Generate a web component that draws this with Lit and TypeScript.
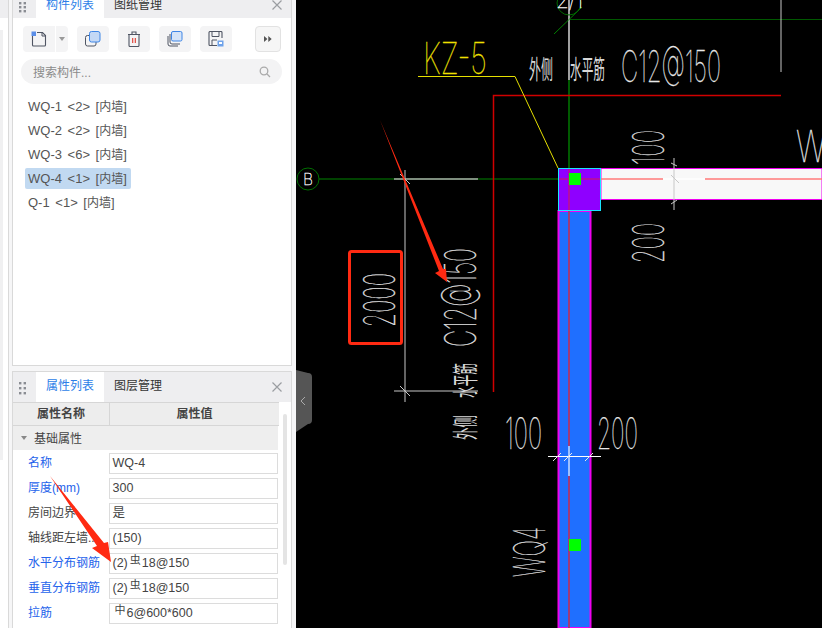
import { LitElement, html, css, svg } from 'lit';
import { customElement } from 'lit/decorators.js';

const components = [
  { name: 'WQ-1', count: 2, kind: '内墙' },
  { name: 'WQ-2', count: 2, kind: '内墙' },
  { name: 'WQ-3', count: 6, kind: '内墙' },
  { name: 'WQ-4', count: 1, kind: '内墙', selected: true },
  { name: 'Q-1', count: 1, kind: '内墙' },
];

const props = [
  { label: '名称', value: 'WQ-4', link: true },
  { label: '厚度(mm)', value: '300', link: true },
  { label: '房间边界', value: '是' },
  { label: '轴线距左墙...', value: '(150)' },
  { label: '水平分布钢筋', link: true, pre: '(2)', sym: '虫', value: '18@150' },
  { label: '垂直分布钢筋', link: true, pre: '(2)', sym: '虫', value: '18@150' },
  { label: '拉筋', link: true, pre: '', sym: '中', value: '6@600*600' },
];

const grip = (step: number) => html`<svg class="grip" width="8" height="14" viewBox="0 0 8 14">
  <g fill="#8a8d93">
    ${[0, 1, 2].map(
      (i) => svg`<rect x="0" y=${1 + i * step} width="2.4" height="2.4" /><rect x="4.600" y=${1 + i * step} width="2.4" height="2.4" />`
    )}
  </g>
</svg>`;

const closeIcon = html`<svg class="close" width="10" height="10" viewBox="0 0 10 10">
  <path d="M.5.5l9 9M9.5.5l-9 9" stroke="#9a9da1" stroke-width="1.2" fill="none" />
</svg>`;

// single-line looking CAD label, stretched to the exact run length
const label = (x: number, y: number, len: number, size: number, text: string, rot = 0, color = '#e8e8e8') =>
  svg`<text class="thin" transform="translate(${x} ${y}) rotate(${rot})" font-size=${size} fill=${color} stroke=${color} stroke-width=".3"
    textLength=${len} lengthAdjust="spacingAndGlyphs">${text}</text>`;

const hanzi = (x: number, y: number, len: number, size: number, text: string, rot = 0) =>
  svg`<text transform="translate(${x} ${y}) rotate(${rot})" font-size=${size} fill="#d8d8d8"
    textLength=${len} lengthAdjust="spacingAndGlyphs">${text}</text>`;

@customElement('app-root')
export class AppRoot extends LitElement {
  static styles = css`
    :host {
      display: block;
      width: 822px;
      height: 628px;
      overflow: hidden;
      font-family: 'Liberation Sans', 'Noto Sans CJK SC', sans-serif;
      font-size: 12px;
      color: #444;
    }
    .page {
      display: flex;
      width: 822px;
      height: 628px;
      position: relative;
    }
    .side {
      width: 296px;
      flex: none;
      background: #f6f6f7;
      display: flex;
      gap: 3px;
    }
    .rail {
      width: 8px;
      flex: none;
      background: #fff;
      border-right: 1px solid #d9d9d9;
      display: flex;
      flex-direction: column;
    }
    .rail-tab {
      height: 18px;
      background: #eeeef0;
      flex: none;
    }
    .rail-strip {
      width: 3px;
      height: 430px;
      margin-top: 12px;
      background: #f0f0f1;
    }
    .panels {
      width: 280px;
      flex: none;
      display: flex;
      flex-direction: column;
      gap: 5px;
    }
    .panel {
      background: #fff;
      border: 1px solid #d9d9d9;
      box-sizing: border-box;
      display: flex;
      flex-direction: column;
      overflow: hidden;
    }
    .panel.top {
      height: 366px;
      flex: none;
      border-top: 0;
    }
    .panel.bottom {
      flex: 1;
      border-bottom: 0;
      position: relative;
    }
    .tabs {
      display: flex;
      align-items: center;
      height: 18px;
      background: #eeeef0;
      flex: none;
    }
    .bottom .tabs {
      height: 30px;
    }
    .top .tabs {
      align-items: flex-start;
    }
    .grip {
      margin: 1px 9px 0 6px;
      flex: none;
    }
    .tab {
      width: 68px;
      height: 100%;
      text-align: center;
      font-size: 12px;
      color: #333;
      line-height: 29px;
    }
    .top .tab {
      line-height: 10px;
    }
    .tab.active {
      background: #fff;
      color: #2c7ee8;
    }
    .close {
      margin-left: auto;
      margin-right: 9px;
    }
    .tools {
      display: flex;
      align-items: center;
      padding: 8px 10px 0 10px;
      height: 26px;
      flex: none;
    }
    .tool {
      width: 32px;
      height: 26px;
      border-radius: 4px;
      background: #f4f4f5;
      display: flex;
      align-items: center;
      justify-content: center;
      margin-right: 9px;
    }
    .tool.split {
      margin-right: 1px;
      border-radius: 4px 0 0 4px;
    }
    .tool.drop {
      width: 12px;
      margin-right: 9px;
      border-radius: 0 4px 4px 0;
    }
    .tool.more {
      width: 26px;
      box-sizing: border-box;
      border: 1px solid #e2e2e2;
      margin: 0 0 0 auto;
      background: #f6f6f6;
    }
    .search {
      margin: 7px 9px 0 8px;
      height: 25px;
      border-radius: 13px;
      background: #f3f3f4;
      color: #8b8b8b;
      display: flex;
      align-items: center;
      justify-content: space-between;
      padding: 0 11px 0 12px;
      font-size: 12px;
      flex: none;
    }
    .list {
      margin: 12px 0 0 12px;
      display: flex;
      flex-direction: column;
      align-items: flex-start;
      gap: 3px;
    }
    .item {
      height: 21px;
      line-height: 21px;
      padding: 0 4px 0 3px;
      border-radius: 2px;
      color: #555;
      white-space: pre;
      font-size: 13px;
      word-spacing: 2px;
    }
    .item .kind {
      font-size: 12px;
    }
    .item.selected {
      background: #c1d9f1;
    }
    .head {
      display: grid;
      grid-template-columns: 96px 170px;
      height: 24px;
      background: #ededed;
      border-bottom: 1px solid #d6d6d6;
      border-top: 1px solid #d6d6d6;
      box-sizing: border-box;
      flex: none;
      font-weight: bold;
      line-height: 22px;
      text-align: center;
      color: #444;
      width: 266px;
    }
    .head div + div {
      border-left: 1px solid #d6d6d6;
    }
    .group {
      height: 24px;
      width: 265px;
      box-sizing: border-box;
      padding-bottom: 1px;
      background: #eeeeee;
      display: flex;
      align-items: center;
      color: #444;
      flex: none;
    }
    .caret {
      width: 0;
      height: 0;
      border: 3px solid transparent;
      border-top: 4px solid #888;
      border-bottom: 0;
      margin: 0 7px 0 8px;
    }
    .rows {
      display: flex;
      flex-direction: column;
      gap: 4px;
      margin-top: 3px;
      flex: none;
    }
    .row {
      display: grid;
      grid-template-columns: 96px 169px;
      height: 21px;
      flex: none;
    }
    .name {
      padding-left: 15px;
      line-height: 21px;
      color: #444;
      white-space: nowrap;
    }
    .name.link {
      color: #2563eb;
    }
    .value {
      border: 1px solid #dcdcdc;
      box-sizing: border-box;
      height: 21px;
      padding-left: 2.5px;
      line-height: 18px;
      font-size: 12.5px;
      color: #444;
      white-space: pre;
    }
    .sym {
      font-size: 11px;
      line-height: 0;
      vertical-align: 3px;
      margin: 0 1px 0 2px;
    }
    .scroll {
      position: absolute;
      right: 4px;
      top: 42px;
      width: 4px;
      height: 151px;
      border-radius: 2px;
      background: #e4e4e4;
    }
    .canvas {
      flex: 1;
      background: #000;
    }
    .canvas svg {
      display: block;
    }
    .cad text {
      font-family: 'Liberation Sans', 'Noto Sans CJK SC', sans-serif;
    }
    .cad text.thin {
      font-family: Inter, 'Liberation Sans', sans-serif;
      font-weight: 100;
    }
    .handle {
      position: absolute;
      left: 296px;
      top: 370px;
    }
    .pointer {
      position: absolute;
      left: 40px;
      top: 470px;
    }
  `;

  renderTools() {
    return html`<div class="tools">
      <div class="tool split">
        <svg width="16" height="16" viewBox="0 0 16 16">
          <path d="M1.500 5v9a1 1 0 0 0 1 1h11a1 1 0 0 0 1-1V4.500L11.500 1.500H6" fill="none" stroke="#4f5563" stroke-width="1.1" />
          <path d="M11 1.500v3.500h3.500" fill="none" stroke="#4f5563" stroke-width="1" />
          <rect x="0.500" y="0.500" width="4.500" height="4.500" fill="#5b8ee8" />
        </svg>
      </div>
      <div class="tool drop">
        <svg width="6" height="4" viewBox="0 0 6 4"><path d="M0 0h6L3 4z" fill="#999" /></svg>
      </div>
      <div class="tool">
        <svg width="16" height="16" viewBox="0 0 16 16">
          <rect x="0.500" y="4.500" width="10.500" height="10.500" rx="2" fill="none" stroke="#4f5563" />
          <rect x="4.500" y="0.500" width="10.500" height="10.500" rx="2" fill="#c3d8f5" stroke="#3f86e6" />
        </svg>
      </div>
      <div class="tool">
        <svg width="14" height="16" viewBox="0 0 14 16">
          <path d="M1 3.500h12M5 3.500V1h4v2.500M2 3.500v11a1 1 0 0 0 1 1h8a1 1 0 0 0 1-1v-11" fill="none" stroke="#4f5563" stroke-width="1.1" />
          <path d="M5.700 7v5M8.300 7v5" stroke="#e03a30" stroke-width="1.1" />
        </svg>
      </div>
      <div class="tool">
        <svg width="16" height="16" viewBox="0 0 16 16">
          <rect x="4.500" y="0.500" width="10.500" height="9.500" rx="1.500" fill="#d5e4f8" stroke="#3f86e6" />
          <path d="M3 3v8a2 2 0 0 0 2 2h8M1 5v8a2 2 0 0 0 2 2h8" fill="none" stroke="#4f5563" />
        </svg>
      </div>
      <div class="tool">
        <svg width="16" height="16" viewBox="0 0 16 16">
          <path d="M14 7V1.500a1 1 0 0 0-1-1H2a1 1 0 0 0-1 1v12a1 1 0 0 0 1 1h7" fill="none" stroke="#4f5563" stroke-width="1.1" />
          <path d="M4 .500v5h7v-5M4 14.500V9h5" fill="none" stroke="#4f5563" />
          <rect x="9.500" y="9.500" width="6" height="6" fill="#6ea2ea" />
          <rect x="11" y="11" width="3" height="2" fill="#fff" />
        </svg>
      </div>
      <div class="tool more">
        <svg width="8" height="6" viewBox="0 0 8 6"><path d="M0 0l3.400 3L0 6zM4.300 0l3.400 3-3.400 3z" fill="#555" /></svg>
      </div>
    </div>`;
  }

  // free canvas: coordinates are page pixels, shifted by the 296px sidebar
  renderCad() {
    return svg`<g class="cad" transform="translate(-296 0)" fill="none">
      <path d="M569 80V168M569 212V628" stroke="#005a00" stroke-width="2" />
      <path d="M569 0V80" stroke="#a0a0a0" stroke-width="2" />
      <path d="M319 179H558" stroke="#005800" stroke-width="1.500" />
      <path d="M394 179H478" stroke="#a8a8a8" stroke-width="1.500" />
      <path d="M570 19.500H822" stroke="#005800" stroke-width="1" />
      <path d="M554 34L582 7" stroke="#00a000" stroke-width="0.800" />
      <circle cx="569" cy="3" r="12" stroke="#006800" stroke-width="1" />
      <circle cx="308" cy="179" r="11" stroke="#007000" stroke-width="1" />
      ${label(303, 185, 10, 16, 'B', 0, '#fff')}
      ${label(556, 8, 27, 20, '2/1', 0, '#fff')}

      <path d="M493.500 392V95.500H781" stroke="#d00000" stroke-width="1.500" />
      <path d="M781 0V72" stroke="#c8c8c8" stroke-width="1" />

      ${label(423, 74, 64, 44, 'KZ-5', 0, '#f0e000')}
      <path d="M418 76.500H515L558 168" stroke="#e6e000" stroke-width="1" />

      ${hanzi(529, 79, 24, 26, '外侧')}
      ${hanzi(570, 79, 35, 26, '水平筋')}
      ${label(621, 82, 100, 44, 'C12@150')}

      <rect x="601" y="168.500" width="221" height="31" fill="#f8f8f8" stroke="#f000f0" stroke-width="1" />
      <path d="M601 179H663M705 179H822" stroke="#ff7a7a" stroke-width="1.500" />
      <path d="M663 179H705" stroke="#fff" stroke-width="1.500" />
      <path d="M674 158V210M671 175l8 8M671 204l6-4M671 163l6 3" stroke="#c8c8c8" stroke-width="1" />

      <rect x="558.500" y="211" width="32" height="417" fill="#1f6fff" stroke="#f000f0" stroke-width="2" />
      <path d="M569 211V628" stroke="#a03a78" stroke-width="2" />
      <path d="M569 446V476" stroke="#9dc0ff" stroke-width="2" />

      <rect x="558.500" y="168.500" width="42" height="42" fill="#8f00ff" stroke="#19e6ff" stroke-width="1" />
      <path d="M569 169V210M559 179H600" stroke="#c0108a" stroke-width="1.500" />
      <rect x="569" y="173" width="12" height="12" fill="#00ff00" />
      <rect x="569" y="539" width="12" height="12" fill="#00ff00" />

      <path d="M405 170V402M394 391H478M400 174l10 10M400 386l10 10" stroke="#c8c8c8" stroke-width="1" />
      ${label(395, 327, 54, 43, '2000', -90)}
      ${label(476, 347, 99, 43, 'C12@150', -90)}
      ${hanzi(475, 398, 35, 26, '水平筋', -90)}
      ${hanzi(475, 440, 25, 26, '外侧', -90)}

      ${label(664, 165, 35, 43, '100', -90)}
      ${label(664, 263, 40, 43, '200', -90)}
      ${label(505, 449, 37, 43, '100')}
      ${label(597, 449, 41, 43, '200')}
      <path d="M548 456.500H601" stroke="#fff" stroke-width="1" />
      <path d="M553 461l8-8M564 461l8-8M585 461l8-8" stroke="#e8e8e8" stroke-width="1" />

      ${label(545, 577, 50, 43, 'WQ4', -90)}
      ${label(796, 162, 30, 43, 'W')}

      <rect x="349.500" y="251.500" width="52" height="92" rx="2" stroke="#ff2a12" stroke-width="3" />

      <path d="M380 120L439 271L435 273L447 282L446 269L443 269Z" fill="#ff2a12" />
    </g>`;
  }

  render() {
    return html`<div class="page">
      <div class="side">
        <div class="rail">
          <div class="rail-tab"></div>
          <div class="rail-strip"></div>
        </div>
        <div class="panels">
          <div class="panel top">
            <div class="tabs">
              ${grip(4)}
              <div class="tab active">构件列表</div>
              <div class="tab">图纸管理</div>
              ${closeIcon}
            </div>
            ${this.renderTools()}
            <div class="search">
              <span>搜索构件...</span>
              <svg width="12" height="12" viewBox="0 0 12 12">
                <circle cx="5" cy="5" r="3.800" fill="none" stroke="#aaa" stroke-width="1.300" />
                <path d="M8 8l3 3" stroke="#aaa" stroke-width="1.300" />
              </svg>
            </div>
            <div class="list">
              ${components.map(
                (c) => html`<div class="item ${c.selected ? 'selected' : ''}">${c.name} &lt;${c.count}&gt; [<span class="kind">${c.kind}</span>]</div>`
              )}
            </div>
          </div>
          <div class="panel bottom">
            <div class="tabs">
              ${grip(5)}
              <div class="tab active">属性列表</div>
              <div class="tab">图层管理</div>
              ${closeIcon}
            </div>
            <div class="head"><div>属性名称</div><div>属性值</div></div>
            <div class="group"><span class="caret"></span>基础属性</div>
            <div class="rows">
              ${props.map(
                (p) => html`<div class="row">
                  <div class="name ${p.link ? 'link' : ''}">${p.label}</div>
                  <div class="value">${p.pre}${p.sym ? html`<span class="sym">${p.sym}</span>` : ''}${p.value}</div>
                </div>`
              )}
            </div>
            <div class="scroll"></div>
          </div>
        </div>
      </div>
      <div class="canvas">
        <svg width="526" height="628" viewBox="0 0 526 628">${this.renderCad()}</svg>
      </div>
      <svg class="handle" viewBox="0 0 16 62" width="16" height="62">
        <path d="M0 0L12 3a4 4 0 0 1 4 4V50a4 4 0 0 1-4 4L0 62Z" fill="#555" />
        <path d="M9 27l-4 4 4 4" stroke="#aaa" fill="none" />
      </svg>
      <svg class="pointer" width="80" height="100" viewBox="0 0 80 100">
        <path d="M10 6L57 76L52 78L71 92L68 72L64 73Z" fill="#ff2a12" />
      </svg>
    </div>`;
  }
}
